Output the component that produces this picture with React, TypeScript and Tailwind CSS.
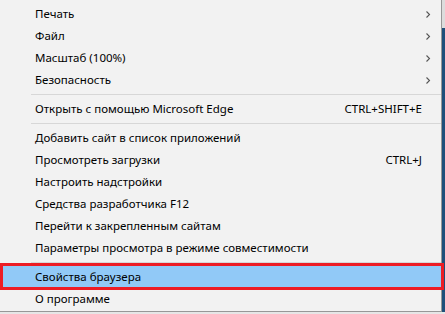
import React from 'react';

type Item =
  | { kind: 'item'; label: string; shortcut?: string; submenu?: boolean; selected?: boolean }
  | { kind: 'sep' };

const items: Item[] = [
  { kind: 'item', label: 'Печать', submenu: true },
  { kind: 'item', label: 'Файл', submenu: true },
  { kind: 'item', label: 'Масштаб (100%)', submenu: true },
  { kind: 'item', label: 'Безопасность', submenu: true },
  { kind: 'sep' },
  { kind: 'item', label: 'Открыть с помощью Microsoft Edge', shortcut: 'CTRL+SHIFT+E' },
  { kind: 'sep' },
  { kind: 'item', label: 'Добавить сайт в список приложений' },
  { kind: 'item', label: 'Просмотреть загрузки', shortcut: 'CTRL+J' },
  { kind: 'item', label: 'Настроить надстройки' },
  { kind: 'item', label: 'Средства разработчика F12' },
  { kind: 'item', label: 'Перейти к закрепленным сайтам' },
  { kind: 'item', label: 'Параметры просмотра в режиме совместимости' },
  { kind: 'sep' },
  { kind: 'item', label: 'Свойства браузера', selected: true },
  { kind: 'item', label: 'О программе' },
];

const Chevron = () => (
  <svg width="6" height="9" viewBox="0 0 6 9" className="shrink-0">
    <polyline points="1.5,1.5 4.5,4.5 1.5,7.5" fill="none" stroke="#555" strokeWidth="1.1" />
  </svg>
);

export default function App() {
  return (
    <div className="flex h-[314px] w-[445px] flex-col bg-[#e6e6e6]">
      <div className="flex h-[312px] w-full">
        {/* меню */}
        <div
          className="relative flex w-[442px] flex-col border-b border-r border-[#979797] bg-[#f2f2f2] pt-[3px] text-[11.5px] text-black"
          style={{ fontFamily: '"Noto Sans", "Liberation Sans", sans-serif' }}
        >
          {items.map((it, i) =>
            it.kind === 'sep' ? (
              <div key={i} className="flex h-[7px] items-center pl-[31px]">
                <div className="h-px w-full bg-[#d7d7d7]" />
              </div>
            ) : (
              <div key={i} className="relative flex h-[22px] items-center">
                {it.selected && (
                  <div className="absolute -top-[3px] left-0 right-[-3px] bottom-[-2px] border-[3px] border-[#ed1c24] bg-[#91c9f7]" />
                )}
                <span className="relative pl-[35px] leading-none">{it.label}</span>
                <span className="flex-1" />
                {it.shortcut && <span className="relative pr-[19px] leading-none">{it.shortcut}</span>}
                {it.submenu && (
                  <span className="relative pr-[10px]">
                    <Chevron />
                  </span>
                )}
              </div>
            )
          )}
        </div>
        {/* фон рабочего стола */}
        <div className="flex w-[3px] flex-col">
          <div className="h-[28px] bg-[#dcdcdc]" />
          <div className="flex-1 bg-[#1f4f7a]" />
        </div>
      </div>
    </div>
  );
}
